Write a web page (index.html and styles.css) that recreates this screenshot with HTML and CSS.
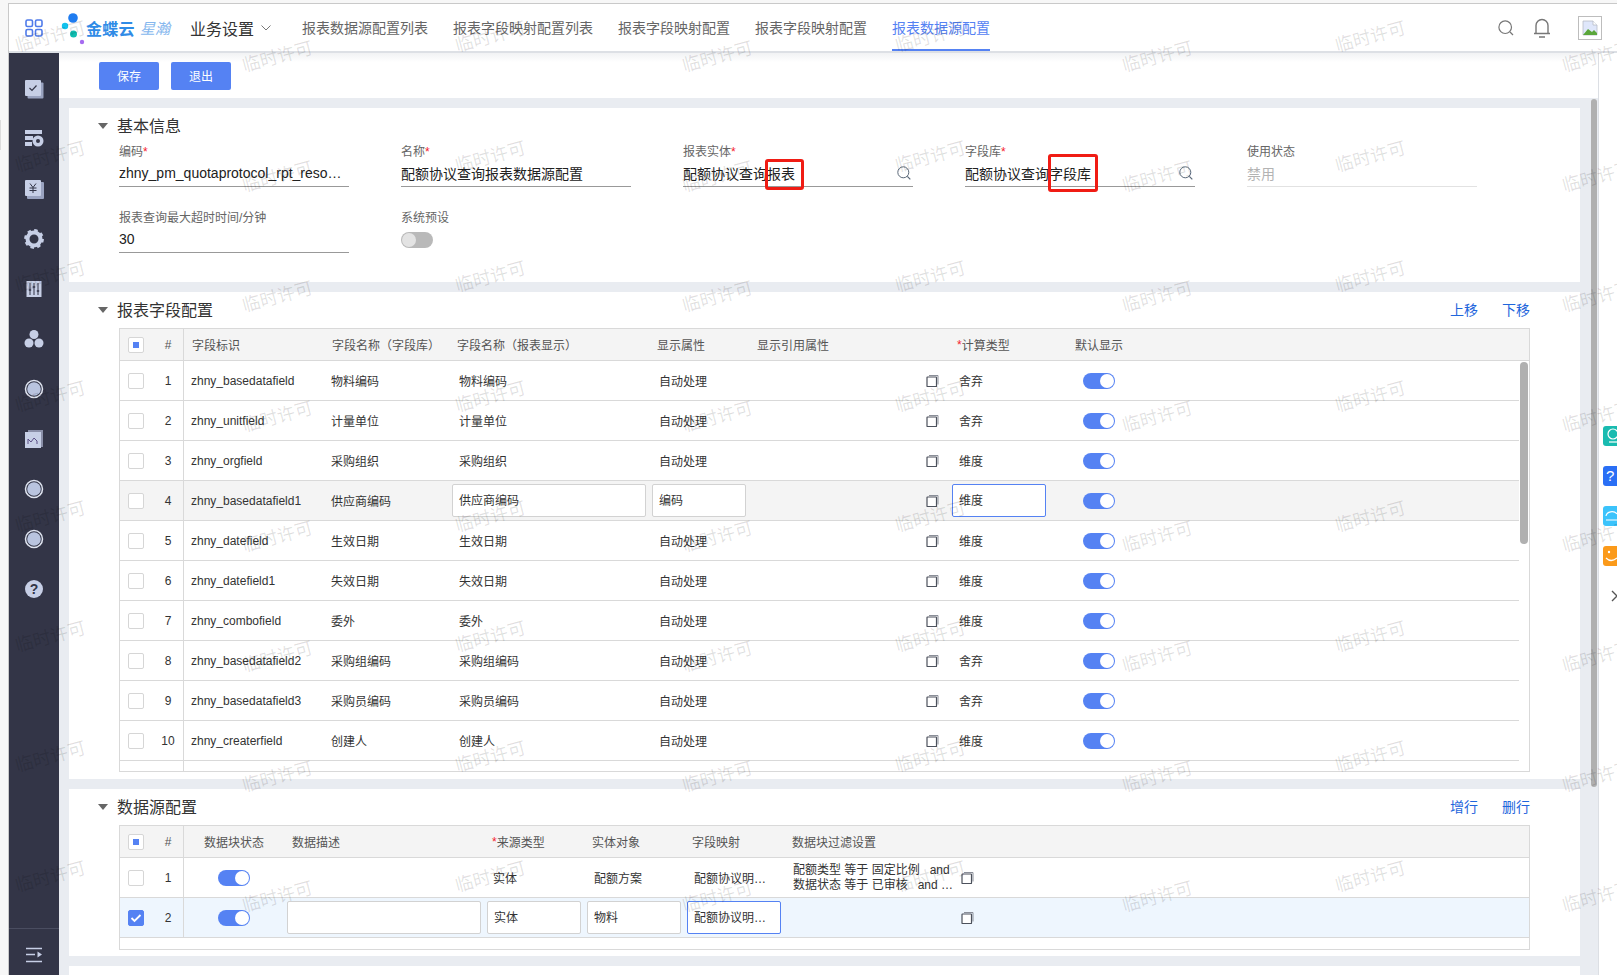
FILE: index.html
```html
<!DOCTYPE html>
<html lang="zh-CN">
<head>
<meta charset="utf-8">
<title>报表数据源配置</title>
<link rel="stylesheet" href="styles.css">
</head>
<body>
<div class="app">
  <header class="topbar">
    <svg class="apps" viewBox="0 0 18 18" width="18" height="18"><g fill="none" stroke="#4f7bea" stroke-width="1.6"><rect x="1" y="1" width="6.5" height="6.5" rx="1.5"/><rect x="10.5" y="1" width="6.5" height="6.5" rx="1.5"/><rect x="1" y="10.5" width="6.5" height="6.5" rx="1.5"/><rect x="10.5" y="10.5" width="6.5" height="6.5" rx="1.5"/></g></svg>
    <svg class="dots" viewBox="0 0 26 34" width="26" height="34"><circle cx="13" cy="6" r="4.8" fill="#1f7cf0"/><circle cx="5" cy="14" r="3.2" fill="#12c2ee"/><circle cx="13.5" cy="22" r="3.5" fill="#10bdb0"/><circle cx="22" cy="30" r="2.2" fill="#a66bf0"/></svg>
    <span class="brand">金蝶云</span><span class="brand-sub">星瀚</span>
    <span class="biz">业务设置</span>
    <svg class="chev" viewBox="0 0 10 6" width="10" height="6"><path d="M.5.5 5 5 9.500.5" fill="none" stroke="#777" stroke-width="1"/></svg>
    <nav class="tabs">
      <a class="tab">报表数据源配置列表</a>
      <a class="tab">报表字段映射配置列表</a>
      <a class="tab">报表字段映射配置</a>
      <a class="tab">报表字段映射配置</a>
      <a class="tab active">报表数据源配置</a>
    </nav>
    <div class="top-right">
      <svg viewBox="0 0 16 16" width="16" height="16"><circle cx="7.200" cy="7.200" r="6.300" fill="none" stroke="#777" stroke-width="1.200"/><path d="M12 12l3 3" stroke="#777" stroke-width="1.200"/></svg>
      <svg class="bell" viewBox="0 0 18 20" width="18" height="20"><path d="M3 15V7.500a6 6 0 0 1 12 0V15M1 15.500h16M6 19h6" fill="none" stroke="#777" stroke-width="1.400"/></svg>
      <span class="broken"><svg viewBox="0 0 16 16" width="16" height="16"><path d="M1 1h10l4 4v10H1z" fill="#dfe7fb" stroke="#b8bcc6" stroke-width=".8"/><path d="M1 15l5-6 4 3 2-2 3 3v2z" fill="#5aa63a"/><path d="M11 1v4h4" fill="#fff" stroke="#b8bcc6" stroke-width=".8"/></svg></span>
    </div>
  </header>

  <div class="workspace">
    <aside class="sidebar">
      <div class="side-list">
        <span class="side-item"><svg viewBox="0 0 20 20" width="20" height="20"><rect x="3.500" y="3.500" width="16" height="16" rx="1" fill="#9aa3c0"/><rect x="1" y="1" width="16" height="16" rx="1" fill="#c7cfe6"/><path d="M5.500 9l2.500 2.500L12.500 6.500" fill="none" stroke="#333547" stroke-width="1.200"/></svg></span>
        <span class="side-item"><svg viewBox="0 0 20 20" width="20" height="20"><path d="M1 1h17v4H1zM1 7h8v4H1zM1 13h7v4H1z" fill="#c7cfe6"/><circle cx="14" cy="12" r="5.500" fill="#c7cfe6"/><circle cx="14" cy="12" r="2" fill="#333547"/></svg></span>
        <span class="side-item"><svg viewBox="0 0 20 20" width="20" height="20"><rect x="3" y="3" width="17" height="17" rx="1" fill="#9aa3c0"/><rect x="1" y="1" width="16" height="16" rx="1" fill="#c7cfe6"/><path d="M6 4.500l3 4 3-4M5.500 9h7M5.500 11.500h7M9 8.500v5.500" fill="none" stroke="#333547" stroke-width="1"/></svg></span>
        <span class="side-item"><svg viewBox="0 0 20 20" width="20" height="20"><circle cx="10" cy="10" r="6.500" fill="none" stroke="#c7cfe6" stroke-width="4"/><circle cx="10" cy="10" r="8.800" fill="none" stroke="#c7cfe6" stroke-width="2.200" stroke-dasharray="3.500 3.400"/></svg></span>
        <span class="side-item"><svg viewBox="0 0 18 18" width="18" height="18"><rect x="1.500" y="1" width="15" height="16" fill="#c7cfe6"/><path d="M5 3v12M9 3v12M13 3v12" stroke="#333547" stroke-width="1"/><path d="M3.800 10h2.400M7.800 7h2.400M11.800 11h2.400" stroke="#333547" stroke-width="1.600"/></svg></span>
        <span class="side-item"><svg viewBox="0 0 20 20" width="20" height="20"><circle cx="10" cy="5.500" r="4.500" fill="#c7cfe6"/><circle cx="5" cy="14" r="4.500" fill="#c7cfe6"/><circle cx="15" cy="14" r="4.500" fill="#c7cfe6"/></svg></span>
        <span class="side-item"><svg viewBox="0 0 20 20" width="20" height="20"><circle cx="10" cy="10" r="8.500" fill="#333547" stroke="#dfe4f0" stroke-width="1.500"/><circle cx="10" cy="10" r="6.800" fill="#b9c4df"/></svg></span>
        <span class="side-item"><svg viewBox="0 0 20 20" width="20" height="20"><rect x="4" y="1" width="15" height="17" fill="#8a8fa8"/><rect x="1" y="3" width="16" height="16" fill="#c7cfe6"/><path d="M4 15v-5l3 3 3-4 3 3v3" fill="none" stroke="#5b4f86" stroke-width="1"/></svg></span>
        <span class="side-item"><svg viewBox="0 0 20 20" width="20" height="20"><circle cx="10" cy="10" r="8.500" fill="#333547" stroke="#dfe4f0" stroke-width="1.500"/><circle cx="10" cy="10" r="6.800" fill="#b9c4df"/></svg></span>
        <span class="side-item"><svg viewBox="0 0 20 20" width="20" height="20"><circle cx="10" cy="10" r="8.500" fill="#333547" stroke="#dfe4f0" stroke-width="1.500"/><circle cx="10" cy="10" r="6.800" fill="#b9c4df"/></svg></span>
        <span class="side-item side-help">?</span>
      </div>
      <div class="side-foot"><svg viewBox="0 0 18 16" width="18" height="16"><path d="M1 1.500h16M1 7.500h9M1 14.500h16" stroke="#c7cfe6" stroke-width="1.500"/><path d="M12.500 4.500l4.500 3-4.500 3z" fill="#c7cfe6"/></svg></div>
    </aside>

    <main class="main">
      <div class="content">
        <div class="toolbar">
          <button class="btn">保存</button>
          <button class="btn">退出</button>
        </div>
        <div class="stack">
          <section class="panel panel-basic">
            <div class="panel-head"><i class="tri"></i><h2 class="panel-title">基本信息</h2></div>
            <div class="fields">
              <div class="field"><label class="lbl">编码<em>*</em></label><div class="val">zhny_pm_quotaprotocol_rpt_reso…</div></div>
              <div class="field"><label class="lbl">名称<em>*</em></label><div class="val">配额协议查询报表数据源配置</div></div>
              <div class="field"><label class="lbl">报表实体<em>*</em></label><div class="val"><span>配额协议查询报表</span><svg class="mag" viewBox="0 0 14 14" width="14" height="14"><circle cx="6.300" cy="6.300" r="5.500" fill="none" stroke="#5a6878" stroke-width="1"/><path d="M10.300 10.300l3 3" stroke="#5a6878" stroke-width="1.200"/></svg></div><b class="mark mark-a"></b></div>
              <div class="field"><label class="lbl">字段库<em>*</em></label><div class="val"><span>配额协议查询字段库</span><svg class="mag" viewBox="0 0 14 14" width="14" height="14"><circle cx="6.300" cy="6.300" r="5.500" fill="none" stroke="#5a6878" stroke-width="1"/><path d="M10.300 10.300l3 3" stroke="#5a6878" stroke-width="1.200"/></svg></div><b class="mark mark-b"></b></div>
              <div class="field"><label class="lbl">使用状态</label><div class="val val-off">禁用</div></div>
              <div class="field"><label class="lbl">报表查询最大超时时间/分钟</label><div class="val">30</div></div>
              <div class="field"><label class="lbl">系统预设</label><span class="sw sw-off field-sw"></span></div>
            </div>
          </section>

          <section class="panel panel-fields">
            <div class="panel-head"><i class="tri"></i><h2 class="panel-title">报表字段配置</h2><div class="acts"><a>上移</a><a>下移</a></div></div>
            <div class="grid grid-a">
              <div class="row row-head">
                <span class="c0"><i class="ck ck-part"></i></span><span class="c1">#</span>
                <span class="h3">字段标识</span><span class="h4">字段名称（字段库）</span><span class="h5">字段名称（报表显示）</span><span class="h5">显示属性</span><span class="h5">显示引用属性</span><span class="h5"><em>*</em>计算类型</span><span class="h9">默认显示</span>
              </div>
              <div class="body">
                <div class="row"><span class="c0"><i class="ck"></i></span><span class="c1">1</span><span class="p7">zhny_basedatafield</span><span class="p6">物料编码</span><span class="p7">物料编码</span><span class="p7">自动处理</span><span class="ic"><svg class="copy" viewBox="0 0 13 13" width="13" height="13"><path d="M3 1.500h9v9" fill="none" stroke="#8b8f99"/><rect x="1" y="3" width="9.500" height="9.500" rx=".5" fill="#fff" stroke="#4c515c" stroke-width="1.200"/></svg></span><span class="p7">舍弃</span><span class="p9"><i class="sw"></i></span></div>
                <div class="row"><span class="c0"><i class="ck"></i></span><span class="c1">2</span><span class="p7">zhny_unitfield</span><span class="p6">计量单位</span><span class="p7">计量单位</span><span class="p7">自动处理</span><span class="ic"><svg class="copy" viewBox="0 0 13 13" width="13" height="13"><path d="M3 1.500h9v9" fill="none" stroke="#8b8f99"/><rect x="1" y="3" width="9.500" height="9.500" rx=".5" fill="#fff" stroke="#4c515c" stroke-width="1.200"/></svg></span><span class="p7">舍弃</span><span class="p9"><i class="sw"></i></span></div>
                <div class="row"><span class="c0"><i class="ck"></i></span><span class="c1">3</span><span class="p7">zhny_orgfield</span><span class="p6">采购组织</span><span class="p7">采购组织</span><span class="p7">自动处理</span><span class="ic"><svg class="copy" viewBox="0 0 13 13" width="13" height="13"><path d="M3 1.500h9v9" fill="none" stroke="#8b8f99"/><rect x="1" y="3" width="9.500" height="9.500" rx=".5" fill="#fff" stroke="#4c515c" stroke-width="1.200"/></svg></span><span class="p7">维度</span><span class="p9"><i class="sw"></i></span></div>
                <div class="row row-on"><span class="c0"><i class="ck"></i></span><span class="c1">4</span><span class="p7">zhny_basedatafield1</span><span class="p6">供应商编码</span><span><div class="inp inp-w194">供应商编码</div></span><span><div class="inp inp-w94">编码</div></span><span class="ic"><svg class="copy" viewBox="0 0 13 13" width="13" height="13"><path d="M3 1.500h9v9" fill="none" stroke="#8b8f99"/><rect x="1" y="3" width="9.500" height="9.500" rx=".5" fill="#fff" stroke="#4c515c" stroke-width="1.200"/></svg></span><span><div class="inp inp-w94 inp-focus">维度</div></span><span class="p9"><i class="sw"></i></span></div>
                <div class="row"><span class="c0"><i class="ck"></i></span><span class="c1">5</span><span class="p7">zhny_datefield</span><span class="p6">生效日期</span><span class="p7">生效日期</span><span class="p7">自动处理</span><span class="ic"><svg class="copy" viewBox="0 0 13 13" width="13" height="13"><path d="M3 1.500h9v9" fill="none" stroke="#8b8f99"/><rect x="1" y="3" width="9.500" height="9.500" rx=".5" fill="#fff" stroke="#4c515c" stroke-width="1.200"/></svg></span><span class="p7">维度</span><span class="p9"><i class="sw"></i></span></div>
                <div class="row"><span class="c0"><i class="ck"></i></span><span class="c1">6</span><span class="p7">zhny_datefield1</span><span class="p6">失效日期</span><span class="p7">失效日期</span><span class="p7">自动处理</span><span class="ic"><svg class="copy" viewBox="0 0 13 13" width="13" height="13"><path d="M3 1.500h9v9" fill="none" stroke="#8b8f99"/><rect x="1" y="3" width="9.500" height="9.500" rx=".5" fill="#fff" stroke="#4c515c" stroke-width="1.200"/></svg></span><span class="p7">维度</span><span class="p9"><i class="sw"></i></span></div>
                <div class="row"><span class="c0"><i class="ck"></i></span><span class="c1">7</span><span class="p7">zhny_combofield</span><span class="p6">委外</span><span class="p7">委外</span><span class="p7">自动处理</span><span class="ic"><svg class="copy" viewBox="0 0 13 13" width="13" height="13"><path d="M3 1.500h9v9" fill="none" stroke="#8b8f99"/><rect x="1" y="3" width="9.500" height="9.500" rx=".5" fill="#fff" stroke="#4c515c" stroke-width="1.200"/></svg></span><span class="p7">维度</span><span class="p9"><i class="sw"></i></span></div>
                <div class="row"><span class="c0"><i class="ck"></i></span><span class="c1">8</span><span class="p7">zhny_basedatafield2</span><span class="p6">采购组编码</span><span class="p7">采购组编码</span><span class="p7">自动处理</span><span class="ic"><svg class="copy" viewBox="0 0 13 13" width="13" height="13"><path d="M3 1.500h9v9" fill="none" stroke="#8b8f99"/><rect x="1" y="3" width="9.500" height="9.500" rx=".5" fill="#fff" stroke="#4c515c" stroke-width="1.200"/></svg></span><span class="p7">舍弃</span><span class="p9"><i class="sw"></i></span></div>
                <div class="row"><span class="c0"><i class="ck"></i></span><span class="c1">9</span><span class="p7">zhny_basedatafield3</span><span class="p6">采购员编码</span><span class="p7">采购员编码</span><span class="p7">自动处理</span><span class="ic"><svg class="copy" viewBox="0 0 13 13" width="13" height="13"><path d="M3 1.500h9v9" fill="none" stroke="#8b8f99"/><rect x="1" y="3" width="9.500" height="9.500" rx=".5" fill="#fff" stroke="#4c515c" stroke-width="1.200"/></svg></span><span class="p7">舍弃</span><span class="p9"><i class="sw"></i></span></div>
                <div class="row"><span class="c0"><i class="ck"></i></span><span class="c1">10</span><span class="p7">zhny_createrfield</span><span class="p6">创建人</span><span class="p7">创建人</span><span class="p7">自动处理</span><span class="ic"><svg class="copy" viewBox="0 0 13 13" width="13" height="13"><path d="M3 1.500h9v9" fill="none" stroke="#8b8f99"/><rect x="1" y="3" width="9.500" height="9.500" rx=".5" fill="#fff" stroke="#4c515c" stroke-width="1.200"/></svg></span><span class="p7">维度</span><span class="p9"><i class="sw"></i></span></div>
              </div>
              <div class="filler filler-a"></div>
              <i class="thumb"></i>
            </div>
          </section>

          <section class="panel panel-source">
            <div class="panel-head"><i class="tri"></i><h2 class="panel-title">数据源配置</h2><div class="acts"><a>增行</a><a>删行</a></div></div>
            <div class="grid grid-b">
              <div class="row row-head">
                <span class="c0"><i class="ck ck-part"></i></span><span class="c1">#</span>
                <span class="h20">数据块状态</span><span class="h5">数据描述</span><span class="h5"><em>*</em>来源类型</span><span class="h5">实体对象</span><span class="h5">字段映射</span><span class="h5">数据块过滤设置</span>
              </div>
              <div class="row"><span class="c0"><i class="ck"></i></span><span class="c1">1</span><span class="p34"><i class="sw"></i></span><span></span><span class="p6">实体</span><span class="p7">配额方案</span><span class="p7">配额协议明…</span><span class="filter"><span class="filter-text">配额类型 等于 固定比例&nbsp;&nbsp;&nbsp;and<br>数据状态 等于 已审核&nbsp;&nbsp;&nbsp;and …</span><svg class="copy" viewBox="0 0 13 13" width="13" height="13"><path d="M3 1.500h9v9" fill="none" stroke="#8b8f99"/><rect x="1" y="3" width="9.500" height="9.500" rx=".5" fill="#fff" stroke="#4c515c" stroke-width="1.200"/></svg></span></div>
              <div class="row row-sel"><span class="c0"><i class="ck ck-on"><svg viewBox="0 0 16 16" width="16" height="16"><path d="M3.500 8l3 3 6-6" fill="none" stroke="#fff" stroke-width="1.800"/></svg></i></span><span class="c1">2</span><span class="p34"><i class="sw"></i></span><span><div class="inp inp-w194"></div></span><span><div class="inp inp-w94">实体</div></span><span><div class="inp inp-w94">物料</div></span><span><div class="inp inp-w94 inp-focus">配额协议明…</div></span><span class="filter filter-empty"><svg class="copy" viewBox="0 0 13 13" width="13" height="13"><path d="M3 1.500h9v9" fill="none" stroke="#8b8f99"/><rect x="1" y="3" width="9.500" height="9.500" rx=".5" fill="#fff" stroke="#4c515c" stroke-width="1.200"/></svg></span></div>
              <div class="filler filler-b"></div>
            </div>
          </section>

          <section class="panel panel-rest"></section>
        </div>
        <i class="page-thumb"></i>
      </div>
      <div class="dock">
        <span class="dock-btn d-teal"><svg viewBox="0 0 14 20" width="14" height="20"><circle cx="10" cy="8" r="5" fill="none" stroke="#fff" stroke-width="1.200"/><path d="M6 16h8" stroke="#fff" stroke-width="1.200"/></svg></span>
        <span class="dock-btn d-blue">?</span>
        <span class="dock-btn d-sky"><svg viewBox="0 0 14 20" width="14" height="20"><path d="M3 10a6 5 0 0 1 11-2M3 14h11" fill="none" stroke="#fff" stroke-width="1.200"/></svg></span>
        <span class="dock-btn d-orange"><svg viewBox="0 0 14 20" width="14" height="20"><circle cx="6" cy="6" r="1.200" fill="#fff"/><path d="M3 12q5 5 11 0" fill="none" stroke="#fff" stroke-width="1.200"/></svg></span>
        <svg class="dock-chev" viewBox="0 0 7 12" width="7" height="12"><path d="M1 1l5 5-5 5" fill="none" stroke="#555" stroke-width="1.400"/></svg>
      </div>
    </main>
  </div>
</div>
<i class="edge-tab"></i>
<div class="wm-layer" aria-hidden="true">
<div class="wm">
  <span>临时许可</span><span>临时许可</span><span>临时许可</span><span>临时许可</span><span>临时许可</span><span>临时许可</span><span>临时许可</span><span>临时许可</span>
  <span>临时许可</span><span>临时许可</span><span>临时许可</span><span>临时许可</span><span>临时许可</span><span>临时许可</span><span>临时许可</span><span>临时许可</span>
  <span>临时许可</span><span>临时许可</span><span>临时许可</span><span>临时许可</span><span>临时许可</span><span>临时许可</span><span>临时许可</span><span>临时许可</span>
  <span>临时许可</span><span>临时许可</span><span>临时许可</span><span>临时许可</span><span>临时许可</span><span>临时许可</span><span>临时许可</span><span>临时许可</span>
  <span>临时许可</span><span>临时许可</span><span>临时许可</span><span>临时许可</span><span>临时许可</span><span>临时许可</span><span>临时许可</span><span>临时许可</span>
  <span>临时许可</span><span>临时许可</span><span>临时许可</span><span>临时许可</span><span>临时许可</span><span>临时许可</span><span>临时许可</span><span>临时许可</span>
  <span>临时许可</span><span>临时许可</span><span>临时许可</span><span>临时许可</span><span>临时许可</span><span>临时许可</span><span>临时许可</span><span>临时许可</span>
  <span>临时许可</span><span>临时许可</span><span>临时许可</span><span>临时许可</span><span>临时许可</span><span>临时许可</span><span>临时许可</span><span>临时许可</span>
</div>
</div>
</body>
</html>
```

FILE: styles.css
```css
* { box-sizing: border-box; }
html, body { margin: 0; height: 975px; overflow: hidden; }
body {
  position: relative;
  background: #f7f7f7;
  padding: 3px 0 0 8px;
  font-family: "Liberation Sans", "Noto Sans CJK SC", sans-serif;
  font-size: 12px;
  color: #333;
}
em { font-style: normal; color: #f5222d; }
a { cursor: pointer; }

.app {
  height: 972px;
  display: flex;
  flex-direction: column;
  border-top: 1px solid #c9c9c9;
  border-left: 1px solid #c9c9c9;
  background: #fff;
}

/* top bar */
.topbar {
  flex: none;
  height: 49px;
  display: flex;
  align-items: center;
  padding-left: 16px;
  background: #fff;
  border-bottom: 2px solid #dde0e5;
  position: relative;
  z-index: 2;
}
.apps { margin-right: 17px; }
.dots { margin: 2px 0 0 0; flex: none; }
.brand { font-size: 16px; font-weight: 700; color: #2f8be6; letter-spacing: .3px; width: 54px; }
.brand-sub { font-size: 15px; font-style: italic; color: #86b7ee; width: 50px; }
.biz { font-size: 16px; color: #333; width: 71px; }
.chev { margin-right: 31px; }
.tabs { display: flex; gap: 25px; height: 100%; }
.tab {
  font-size: 14px;
  color: #666;
  line-height: 48px;
  height: 47px;
  white-space: nowrap;
  border-bottom: 2px solid transparent;
}
.tab.active { color: #5582f3; border-bottom-color: #5582f3; }
.top-right { margin-left: auto; display: flex; align-items: center; gap: 19px; padding-right: 15px; }
.bell { margin-right: 8px; }
.broken {
  width: 24px;
  height: 24px;
  border: 1px solid #bdbdbd;
  display: flex;
  align-items: center;
  justify-content: center;
}

/* sidebar */
.workspace { flex: 1; min-height: 0; display: flex; }
.sidebar {
  flex: none;
  width: 50px;
  background: #333547;
  display: flex;
  flex-direction: column;
}
.side-list { flex: 1; padding-top: 11px; }
.side-item { height: 50px; display: flex; align-items: center; justify-content: center; }
.side-help {
  width: 18px;
  height: 18px;
  margin: 16px auto;
  border-radius: 50%;
  background: #c7cfe6;
  color: #333547;
  font-size: 14px;
  font-weight: 700;
}
.side-foot {
  height: 47px;
  padding-top: 5px;
  border-top: 1px solid #4a4d60;
  display: flex;
  align-items: center;
  justify-content: center;
}

/* main */
.main { flex: 1; min-width: 0; display: flex; position: relative; background: #fff; }
.content {
  flex: 1;
  min-width: 0;
  display: flex;
  flex-direction: column;
  position: relative;
  border-right: 1px solid #dcdfe4;
}
.toolbar {
  flex: none;
  height: 45px;
  padding: 9px 0 0 40px;
  display: flex;
  gap: 12px;
  align-items: flex-start;
  background: linear-gradient(#f1f2f4, #fff 9px);
}
.btn {
  width: 60px;
  height: 28px;
  padding: 0 0 2px;
  border: 0;
  border-radius: 2px;
  background: #5582f3;
  color: #fff;
  font: inherit;
}
.stack {
  flex: 1;
  min-height: 0;
  overflow: hidden;
  background: #e9ecf1;
  padding: 10px 18px 0 10px;
  display: flex;
  flex-direction: column;
  gap: 10px;
}
.panel { background: #fff; flex: none; }
.panel-basic { height: 174px; }
.panel-fields { height: 487px; }
.panel-source { height: 167px; }
.panel-rest { flex: 1; }
.panel-head { height: 36px; display: flex; align-items: center; padding: 0 50px 2px 29px; }
.tri {
  width: 0;
  height: 0;
  border-left: 5px solid transparent;
  border-right: 5px solid transparent;
  border-top: 6px solid #666;
  margin: 1px 9px 0 0;
}
.panel-title { margin: 0; font-size: 16px; font-weight: 400; color: #333; }
.acts { margin-left: auto; display: flex; gap: 24px; }
.acts a { font-size: 14px; color: #1f66dc; }

/* form */
.fields {
  display: grid;
  grid-template-columns: repeat(5, 230px);
  grid-auto-rows: 43px;
  column-gap: 52px;
  row-gap: 23px;
  padding-left: 50px;
}
.field { position: relative; display: flex; flex-direction: column; }
.lbl { height: 14px; line-height: 16px; color: #666; font-size: 12px; }
.val {
  height: 29px;
  border-bottom: 1px solid #999;
  display: flex;
  align-items: center;
  justify-content: space-between;
  font-size: 14px;
  color: #212121;
  white-space: nowrap;
  overflow: hidden;
  padding: 1px 2px 0 0;
}
.val-off { color: #b3b3b3; border-bottom-color: #e2e2e2; }
.mark {
  position: absolute;
  border: 3px solid #f01c14;
  border-radius: 3px;
  pointer-events: none;
}
.mark-a { left: 82px; top: 15px; width: 39px; height: 31px; }
.mark-b { left: 83px; top: 10px; width: 50px; height: 38px; }

/* switches and checks */
.sw {
  display: block;
  width: 32px;
  height: 16px;
  border-radius: 8px;
  background: #5582f3;
  position: relative;
}
.sw::after {
  content: "";
  position: absolute;
  right: 1px;
  top: 1px;
  width: 14px;
  height: 14px;
  border-radius: 50%;
  background: #fff;
}
.sw-off { background: #b9b9b9; }
.sw-off::after { right: auto; left: 1px; background: #e3e3e3; }
.field-sw { margin-top: 8px; }
.ck {
  display: block;
  width: 16px;
  height: 16px;
  background: #fff;
  border: 1px solid #d6d6d6;
  border-radius: 2px;
  position: relative;
}
.ck-part::after {
  content: "";
  position: absolute;
  left: 4px;
  top: 4px;
  width: 6px;
  height: 6px;
  background: #5582f3;
}
.ck-on { background: #5582f3; border-color: #5582f3; }
.ck-on svg { display: block; margin: -1px; }

/* grids */
.grid { margin-left: 50px; margin-right: 50px; border: 1px solid #d9d9d9; position: relative; }
.row {
  display: grid;
  align-items: center;
  height: 40px;
  border-bottom: 1px solid #d9d9d9;
  white-space: nowrap;
}
.row > span { display: flex; align-items: center; height: 100%; min-width: 0; color: #333; }
.grid-a .row, .filler-a { grid-template-columns: 33px 31px 141px 127px 200px 100px 200px 100px 1fr; }
.grid-b .row { grid-template-columns: 33px 31px 103px 200px 100px 100px 100px 1fr; }
.row-head { height: 32px; background: #f4f4f4; }
.row-head > span { color: #555; }
.body { margin-right: 10px; }
.row-on { background: #f4f4f4; }
.row-sel { background: #eef6fe; }
.c0 { padding-left: 8px; }
.row > .c1 { justify-content: center; border-right: 1px solid #d9d9d9; font-size: 12px; }
.p6 { padding-left: 6px; }
.p7 { padding-left: 7px; }
.p9 { padding-left: 31px; }
.p34 { padding-left: 34px; }
.h3 { padding-left: 8px; }
.h4 { padding-left: 7px; }
.h5 { padding-left: 5px; }
.h9 { padding-left: 23px; }
.h20 { padding-left: 20px; }
.row > .ic { justify-content: flex-end; padding-right: 13px; }
.copy { flex: none; display: block; }
.inp {
  height: 33px;
  line-height: 33px;
  background: #fff;
  border: 1px solid #d2d2d2;
  border-radius: 2px;
  padding-left: 6px;
  color: #333;
  overflow: hidden;
}
.inp-w194 { width: 194px; }
.inp-w94 { width: 94px; }
.inp-focus { border-color: #5582f3; }
.filler { height: 10px; }
.filler-a { display: grid; }
.filler-a::before { content: ""; grid-column: 2; border-right: 1px solid #d9d9d9; }
.filler-b { height: 11px; }
.filter { padding-left: 6px; }
.filter-text { width: 168px; line-height: 15px; flex: none; overflow: hidden; }
.filter-empty { padding-left: 174px; }
.thumb {
  position: absolute;
  right: 1px;
  top: 33px;
  width: 8px;
  height: 182px;
  border-radius: 4px;
  background: #b0b0b0;
}
.page-thumb {
  position: absolute;
  right: 1px;
  top: 46px;
  width: 6px;
  height: 688px;
  border-radius: 3px;
  background: #b0b0b0;
}

/* right dock */
.dock {
  flex: none;
  width: 18px;
  padding: 373px 0 0 4px;
  display: flex;
  flex-direction: column;
  gap: 20px;
  overflow: hidden;
}
.dock-btn {
  width: 20px;
  height: 20px;
  flex: none;
  border-radius: 3px 0 0 3px;
  display: block;
  color: #fff;
  font-size: 15px;
  line-height: 20px;
  padding-left: 3px;
}
.dock-btn svg { display: block; margin-left: -3px; }
.d-teal { background: #19bbb0; }
.d-blue { background: #2a6ff5; }
.d-sky { background: #3bc3fb; }
.d-orange { background: #fb9a1a; }
.dock-chev { margin: 4px 0 0 8px; flex: none; }

.edge-tab {
  position: absolute;
  left: 0;
  top: 120px;
  width: 1px;
  height: 30px;
  background: #dcdcdc;
}

/* watermark */
.wm-layer {
  position: absolute;
  left: 0;
  top: 0;
  width: 1617px;
  height: 975px;
  overflow: hidden;
  pointer-events: none;
  z-index: 5;
}
.wm {
  margin: -25px 0 0 -60px;
  display: grid;
  grid-template-columns: repeat(8, 220px);
  grid-auto-rows: 120px;
}
.wm span {
  align-self: center;
  justify-self: center;
  font-size: 18px;
  color: rgba(0, 0, 0, .12);
  transform: rotate(-15deg);
  white-space: nowrap;
}
.wm span:nth-child(even) { transform: translate(7px, 20px) rotate(-15deg); }
```
